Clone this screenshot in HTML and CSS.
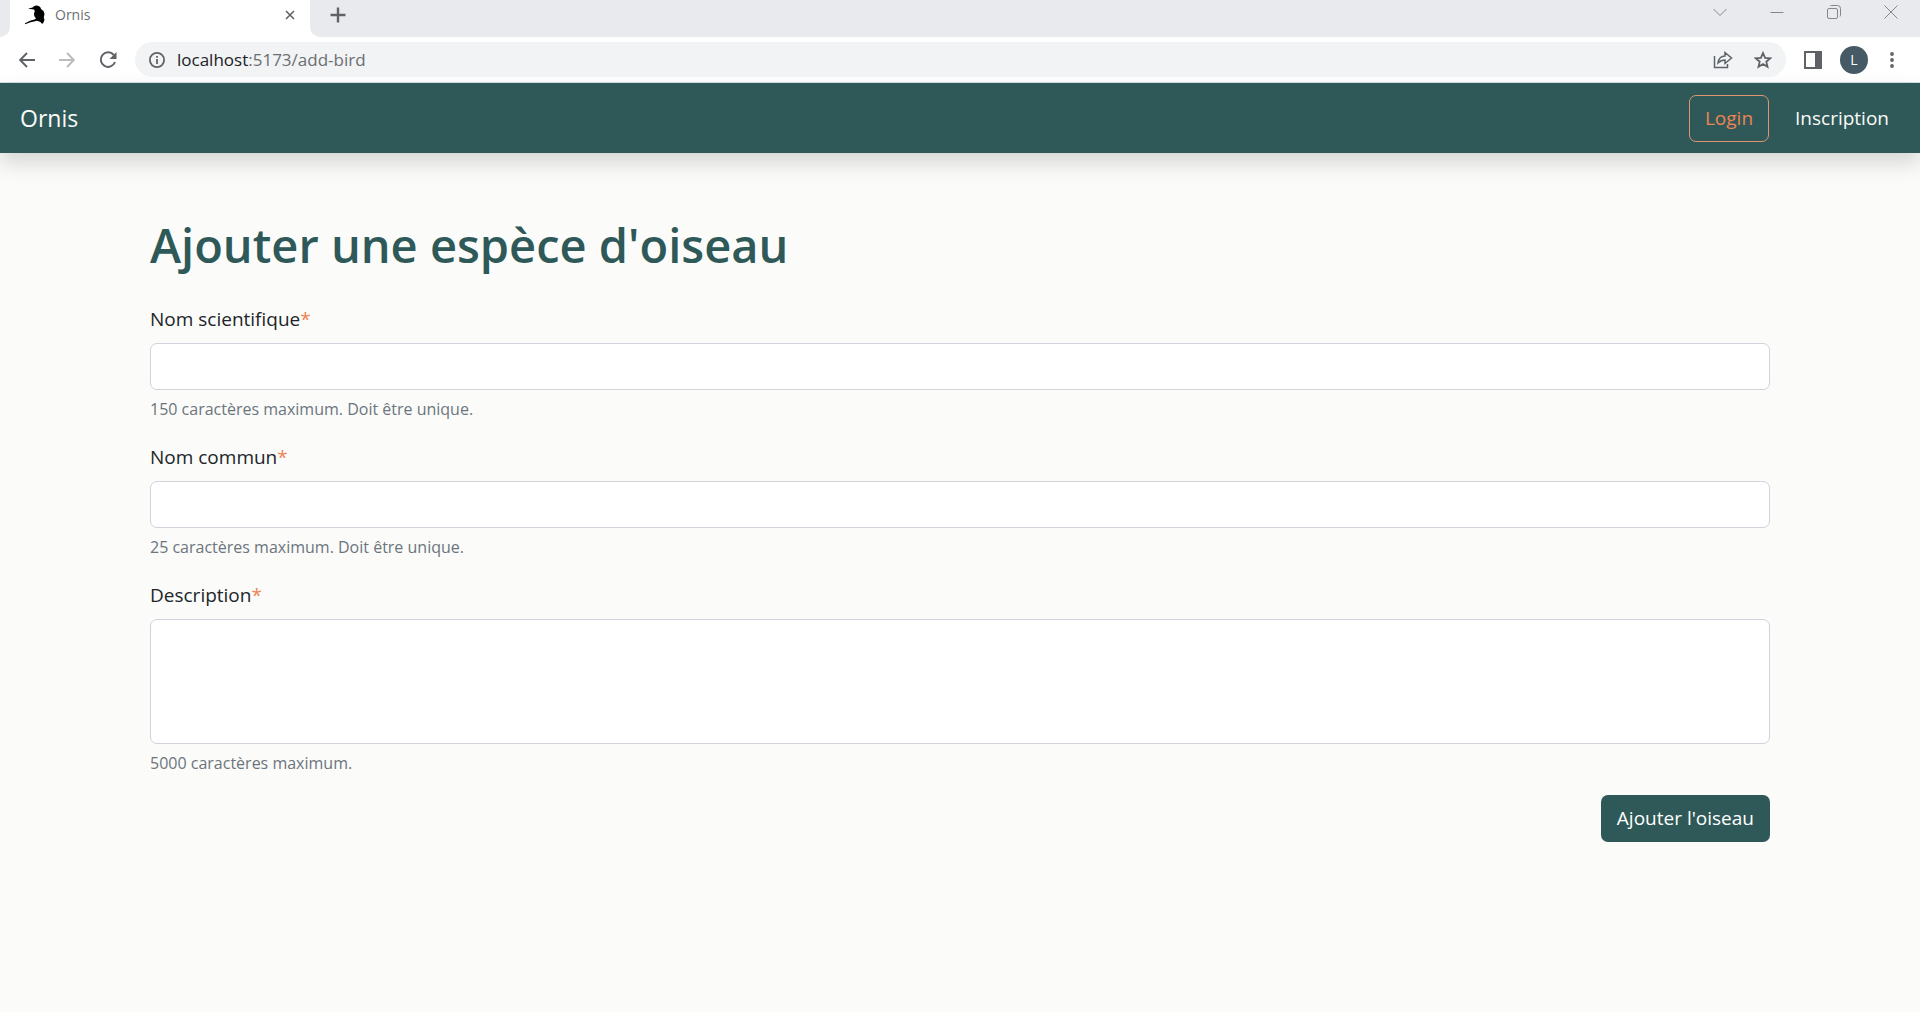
FILE: index.html
```html
<!DOCTYPE html>
<html lang="fr">
<head>
<meta charset="utf-8">
<title>Ornis</title>
<link rel="stylesheet" href="styles.css">
</head>
<body>
<div class="browser">
  <div class="tabstrip">
    <div class="tab-edge"></div>
    <div class="tab">
      <svg class="favicon" width="20" height="20" viewBox="0 0 20 20"><path d="M3 3.800 7.500 2.600Q8.500 .6 11 .4Q15.500 .5 16 4L18.500 6 19.500 9 18.800 12.500 19.500 15 18 18.600 16.500 18.600 15.500 17 12 15.800 9 16.600 5.500 17.200 0 19.300 0 18.300 5 15.800 9.500 14.600 11 13.500Q8.500 11.500 9 8.500L9.800 6 9 4.600 3 3.800Z"/></svg>
      <span class="tab-title">Ornis</span>
      <button class="icon-btn" aria-label="Fermer l'onglet"><svg width="10" height="10" viewBox="0 0 10 10" class="line"><path d="M1 1 9 9M9 1 1 9" stroke-width="1.600"/></svg></button>
    </div>
    <button class="icon-btn new-tab" aria-label="Nouvel onglet"><svg width="16" height="16" viewBox="0 0 16 16" class="line"><path d="M8 .5V15.500M.5 8H15.500" stroke-width="2.400"/></svg></button>
    <div class="window-controls">
      <button class="icon-btn" aria-label="Rechercher"><svg width="14" height="14" viewBox="0 0 14 14" class="line thin"><path d="M.5 4 7 10.500 13.500 4"/></svg></button>
      <button class="icon-btn" aria-label="Réduire"><svg width="14" height="14" viewBox="0 0 14 14" class="line thin"><path d="M.5 7.500H13.500"/></svg></button>
      <button class="icon-btn" aria-label="Restaurer"><svg width="14" height="14" viewBox="0 0 14 14" class="line thin"><rect x=".5" y="3.500" width="10" height="10" rx="1.500"/><path d="M3 1Q3.500 .5 4.500 .5H10.500Q13.500 .5 13.500 3.500V10Q13.500 11 13 11.500"/></svg></button>
      <button class="icon-btn" aria-label="Fermer"><svg width="14" height="14" viewBox="0 0 14 14" class="line thin"><path d="M.5 .5 13.500 13.500M13.500 .5 .5 13.500"/></svg></button>
    </div>
  </div>
  <div class="toolbar">
    <div class="nav-buttons">
      <button class="icon-btn" aria-label="Précédent"><svg width="16" height="16" viewBox="0 0 16 16" class="line"><path d="M16 8H1.500M8 1 1.200 8 8 15" stroke-width="1.900"/></svg></button>
      <button class="icon-btn" aria-label="Suivant"><svg width="16" height="16" viewBox="0 0 16 16" class="line pale"><path d="M0 8H14.500M8 1 14.800 8 8 15" stroke-width="1.900"/></svg></button>
      <button class="icon-btn" aria-label="Actualiser"><svg width="18" height="18" viewBox="0 0 18 18" class="line"><path d="M14.800 4A7.300 7.300 0 1 0 16 11" stroke-width="2"/><path class="solid" d="M17.500 1V8H10.500Z"/></svg></button>
    </div>
    <div class="address">
      <svg width="16" height="16" viewBox="0 0 16 16" class="line"><circle cx="8" cy="8" r="7.100" stroke-width="1.800"/><path d="M8 7V12M8 4V5.800" stroke-width="1.800"/></svg>
      <span class="url"><span class="host">localhost</span>:5173/add-bird</span>
      <button class="icon-btn" aria-label="Partager"><svg width="20" height="20" viewBox="0 0 20 20" class="line"><path d="M1.500 6V17.500H14.500V14" stroke-width="1.500"/><path d="M5 13Q6 6 12 6V2.500L18.500 8 12 13.500V10Q8 10 5 13Z" stroke-width="1.500"/></svg></button>
      <button class="icon-btn" aria-label="Ajouter aux favoris"><svg width="18" height="18" viewBox="0 0 18 18" class="line"><path d="M9 2 11.100 6.800 16.300 7.300 12.300 10.700 13.500 15.800 9 13.100 4.500 15.800 5.700 10.700 1.700 7.300 6.900 6.800Z" stroke-width="1.800"/></svg></button>
    </div>
    <div class="extras">
      <button class="icon-btn" aria-label="Panneau latéral"><svg width="18" height="18" viewBox="0 0 18 18" class="line"><rect x="1" y="1" width="16" height="16" stroke-width="2"/><path class="solid" d="M11 1H18V17H11Z"/></svg></button>
      <button class="avatar">L</button>
      <button class="icon-btn" aria-label="Menu"><svg width="4" height="18" viewBox="0 0 4 18"><g class="solid"><circle cx="2" cy="3" r="1.900"/><circle cx="2" cy="9" r="1.900"/><circle cx="2" cy="15" r="1.900"/></g></svg></button>
    </div>
  </div>
</div>
<nav class="navbar">
  <a class="brand" href="#">Ornis</a>
  <a class="btn btn-outline" href="#">Login</a>
  <a class="btn btn-link" href="#">Inscription</a>
</nav>
<main class="container">
  <h1>Ajouter une espèce d'oiseau</h1>
  <form>
    <div class="field">
      <label for="scientific">Nom scientifique<span class="req">*</span></label>
      <input class="control" id="scientific" type="text" maxlength="150">
      <p class="help">150 caractères maximum. Doit être unique.</p>
    </div>
    <div class="field">
      <label for="common">Nom commun<span class="req">*</span></label>
      <input class="control" id="common" type="text" maxlength="25">
      <p class="help">25 caractères maximum. Doit être unique.</p>
    </div>
    <div class="field">
      <label for="description">Description<span class="req">*</span></label>
      <textarea class="control" id="description" rows="4" maxlength="5000"></textarea>
      <p class="help">5000 caractères maximum.</p>
    </div>
    <div class="actions"><button class="btn btn-primary" type="submit">Ajouter l'oiseau</button></div>
  </form>
</main>
</body>
</html>
```
FILE: styles.css
```css
* { box-sizing: border-box; }
body {
  margin: 0;
  background: #fbfbf9;
  color: #212529;
  font-family: "Segoe UI", "Open Sans", "Noto Sans", sans-serif;
  font-size: 19px;
  line-height: 30px;
}
button, input, textarea { font: inherit; }
a { text-decoration: none; }
svg { display: block; flex: none; }

/* Browser frame */
.browser { background: #fff; border-bottom: 1px solid #d3e0df; }
.icon-btn { display: flex; padding: 0; border: 0; background: none; }
.line { fill: none; stroke: #5f6368; }
.thin { stroke: #85878a; }
.pale { stroke: #babcbe; }
.solid { fill: #5f6368; stroke: none; }
.tabstrip { display: flex; height: 37px; background: #fff; }
.tab-edge { width: 10px; background: #e8eaed; border-bottom-right-radius: 10px; }
.tab { display: flex; align-items: center; width: 300px; padding: 0 15px 7px; background: #fff; }
.tab-title { flex: 1; padding-left: 10px; color: #6b6e72; font-size: 14px; }
.new-tab { flex: 1; padding: 7px 20px; background: #e8eaed; border-bottom-left-radius: 10px; }
.window-controls { display: flex; gap: 43px; padding: 5px 22px 0 0; background: #e8eaed; }
.toolbar { display: flex; align-items: center; gap: 26px; height: 45px; padding: 0 26px 0 19px; }
.nav-buttons { display: flex; align-items: center; gap: 24px; margin-right: -8px; }
.address { display: flex; flex: 1; align-items: center; gap: 21px; height: 35px; padding: 0 14px; border-radius: 18px; background: #f1f3f4; }
.url { flex: 1; margin-left: -9px; color: #6b6e72; font-size: 17px; }
.host { color: #202124; }
.extras { display: flex; align-items: center; gap: 18px; margin-left: -8px; }
.extras .icon-btn:last-child { margin-left: 4px; }
.avatar { width: 28px; height: 28px; padding: 0; border: 0; border-radius: 50%; background: #455a64; color: #fff; font-size: 14px; line-height: 28px; }

/* Site navigation */
.navbar { display: flex; align-items: center; height: 70px; padding: 0 15px 0 20px; background: #2e5958; box-shadow: 0 10px 20px rgba(0, 0, 0, .15); }
.brand { flex: 1; color: #fbfbf9; font-size: 23px; }
.btn { padding: 8px 15px; border: 1px solid transparent; border-radius: 7px; line-height: 29px; }
.btn-outline { margin-right: 10px; border-color: #de9570; color: #ee8354; }
.btn-link { color: #fbfbf9; }
.btn-primary { background: #2e5958; color: #fff; }

/* Form */
.container { padding: 60px 150px; }
h1 { margin: 0 0 27px; color: #2e5958; font-size: 47px; font-weight: 600; line-height: 64px; }
label, .control { display: block; }
label { margin: 0 0 9px; }
.field + .field { padding-top: 19px; }
.req { color: #ee8354; }
.control { width: 100%; height: 47px; padding: 7px 15px; border: 1px solid #ced4da; border-radius: 7px; background: #fff; resize: none; }
textarea.control { height: 125px; }
.help { margin: 5px 0 0; color: #6c757d; font-size: 16px; line-height: 28px; }
.actions { display: flex; justify-content: flex-end; padding-top: 18px; }
```
